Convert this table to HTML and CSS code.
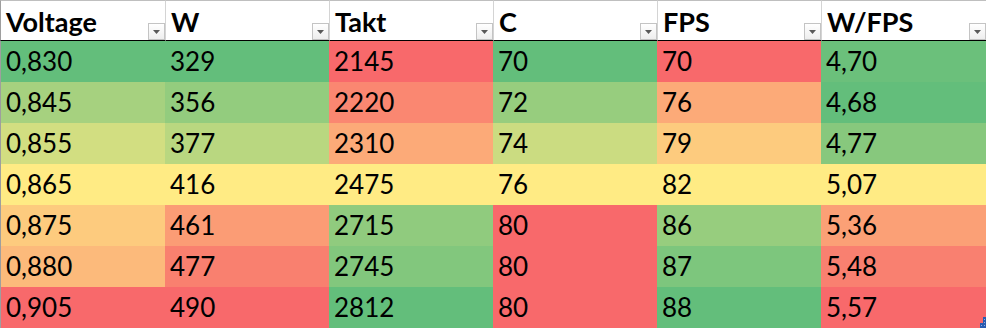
FILE: index.html
```html
<!DOCTYPE html>
<html lang="de">
<head>
<meta charset="utf-8">
<title>Voltage table</title>
<link rel="stylesheet" href="styles.css">
</head>
<body>
<div class="sheet">
  <div class="hd first"><span class="lbl">Voltage</span><span class="flt"><svg width="7" height="4" viewBox="0 0 7 4"><path d="M0 0H7L3.5 4Z" fill="#595959"/></svg></span></div>
  <div class="hd"><span class="lbl">W</span><span class="flt"><svg width="7" height="4" viewBox="0 0 7 4"><path d="M0 0H7L3.5 4Z" fill="#595959"/></svg></span></div>
  <div class="hd"><span class="lbl">Takt</span><span class="flt"><svg width="7" height="4" viewBox="0 0 7 4"><path d="M0 0H7L3.5 4Z" fill="#595959"/></svg></span></div>
  <div class="hd"><span class="lbl">C</span><span class="flt"><svg width="7" height="4" viewBox="0 0 7 4"><path d="M0 0H7L3.5 4Z" fill="#595959"/></svg></span></div>
  <div class="hd"><span class="lbl">FPS</span><span class="flt"><svg width="7" height="4" viewBox="0 0 7 4"><path d="M0 0H7L3.5 4Z" fill="#595959"/></svg></span></div>
  <div class="hd last"><span class="lbl">W/FPS</span><span class="flt"><svg width="7" height="4" viewBox="0 0 7 4"><path d="M0 0H7L3.5 4Z" fill="#595959"/></svg></span></div>

  <div class="cell first" style="background:#63be7b">0,830</div>
  <div class="cell" style="background:#63be7b">329</div>
  <div class="cell" style="background:#f8696b">2145</div>
  <div class="cell" style="background:#63be7b">70</div>
  <div class="cell" style="background:#f8696b">70</div>
  <div class="cell" style="background:#6bc07b">4,70</div>

  <div class="cell first" style="background:#a6d17f">0,845</div>
  <div class="cell" style="background:#93cc7e">356</div>
  <div class="cell" style="background:#fa8771">2220</div>
  <div class="cell" style="background:#97cd7e">72</div>
  <div class="cell" style="background:#fcaa78">76</div>
  <div class="cell" style="background:#63be7b">4,68</div>

  <div class="cell first" style="background:#d2de81">0,855</div>
  <div class="cell" style="background:#b9d780">377</div>
  <div class="cell" style="background:#fcaa78">2310</div>
  <div class="cell" style="background:#cbdc81">74</div>
  <div class="cell" style="background:#fdcb7e">79</div>
  <div class="cell" style="background:#87c87d">4,77</div>

  <div class="cell first" style="background:#ffeb84">0,865</div>
  <div class="cell" style="background:#ffeb84">416</div>
  <div class="cell" style="background:#ffeb84">2475</div>
  <div class="cell" style="background:#ffeb84">76</div>
  <div class="cell" style="background:#ffeb84">82</div>
  <div class="cell" style="background:#ffeb84">5,07</div>

  <div class="cell first" style="background:#fdcb7e">0,875</div>
  <div class="cell" style="background:#fb9c75">461</div>
  <div class="cell" style="background:#90cb7e">2715</div>
  <div class="cell" style="background:#f8696b">80</div>
  <div class="cell" style="background:#97cd7e">86</div>
  <div class="cell" style="background:#fba076">5,36</div>

  <div class="cell first" style="background:#fcba7b">0,880</div>
  <div class="cell" style="background:#f9806f">477</div>
  <div class="cell" style="background:#82c77d">2745</div>
  <div class="cell" style="background:#f8696b">80</div>
  <div class="cell" style="background:#7dc67d">87</div>
  <div class="cell" style="background:#f98070">5,48</div>

  <div class="cell first" style="background:#f8696b">0,905</div>
  <div class="cell" style="background:#f8696b">490</div>
  <div class="cell" style="background:#63be7b">2812</div>
  <div class="cell" style="background:#f8696b">80</div>
  <div class="cell" style="background:#63be7b">88</div>
  <div class="cell last" style="background:#f8696b">5,57<svg class="grip" width="6" height="11" viewBox="0 0 6 11"><path d="M3 0H6V11H0V6H3Z" fill="#2b5cb0"/><rect x="4" y="2" width="1" height="1" fill="#8fb0e6"/><rect x="4" y="5" width="1" height="1" fill="#8fb0e6"/><rect x="1" y="8" width="1" height="1" fill="#8fb0e6"/><rect x="4" y="8" width="1" height="1" fill="#8fb0e6"/></svg></div>
</div>
</body>
</html>
```

FILE: styles.css
```css
html, body {
  margin: 0;
  padding: 0;
  background: #ffffff;
}

.sheet {
  display: grid;
  grid-template-columns: 165px 164px 164px 164px 164px 165px;
  grid-template-rows: 41px repeat(7, 41px);
  width: 986px;
  font-family: Lato, "Open Sans", sans-serif;
  font-size: 26px;
  color: #000000;
}

.hd {
  box-sizing: border-box;
  display: flex;
  align-items: flex-start;
  border-top: 1px solid #bfbfbf;
  border-bottom: 1px solid #000000;
  border-left: 1px solid #d4d4d4;
  padding-left: 5px;
  background: #ffffff;
  font-weight: 700;
  font-size: 27px;
}

.hd.first {
  border-left-color: #9e9e9e;
}

.lbl {
  line-height: 39px;
  padding-top: 1px;
}

.flt {
  box-sizing: border-box;
  margin-left: auto;
  align-self: flex-end;
  width: 17px;
  height: 17px;
  border: 1px solid #c4c4c4;
  background: linear-gradient(#ffffff, #eeeeee);
  display: flex;
  align-items: center;
  justify-content: center;
}

.flt svg {
  display: block;
  margin-top: 1px;
}

.cell {
  box-sizing: border-box;
  position: relative;
  padding-left: 5px;
  line-height: 41px;
}

.cell.first {
  border-left: 1px solid #9e9e9e;
}

.grip {
  position: absolute;
  right: 0;
  bottom: 0;
  display: block;
}
```
